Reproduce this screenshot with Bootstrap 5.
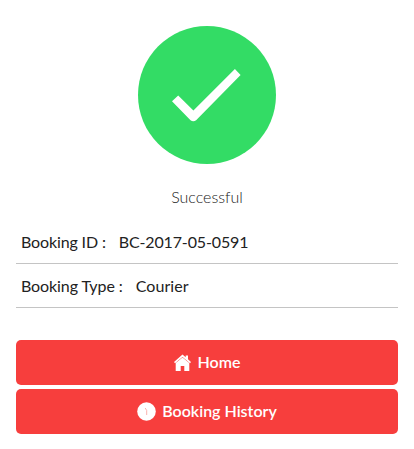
<!DOCTYPE html>
<html lang="en">
<head>
<meta charset="utf-8">
<meta name="viewport" content="width=device-width, initial-scale=1">
<title>Booking Successful</title>
<link href="https://cdn.jsdelivr.net/npm/bootstrap@5.3.0/dist/css/bootstrap.min.css" rel="stylesheet">
<style>
body { font-family: Lato, sans-serif; font-size: 16px; color: #222; background: #fff; }
.confirm { padding: 26px 16px 15px; }
.tick { width: 138px; height: 138px; }
.status { font-weight: 300; line-height: 24px; margin-top: 21px; color: #222; }
.details { margin: 12px 0 32px; }
.detail { height: 44px; padding: 0 5px; border-bottom: 1px solid #c4c4c4; line-height: 43px; letter-spacing: -.14px; }
.detail:first-child { height: 43px; line-height: 42px; }
.detail dt { font-weight: 400; margin-right: 13px; }
.detail + .detail { letter-spacing: -.1px; line-height: 44px; }
.detail + .detail dd { letter-spacing: .08px; }
.actions { gap: 4px; }
.btn-action { --bs-btn-color: #fff; --bs-btn-bg: #f73e3d; --bs-btn-hover-color: #fff; --bs-btn-hover-bg: #de3231; --bs-btn-border-radius: 5px; height: 45px; padding: 0; border: 0; gap: 6px; font-weight: 600; font-size: 16px; }
.btn-action span { padding-bottom: 2px; }
</style>
</head>
<body>
<main class="confirm">
  <div class="text-center">
    <svg class="tick d-block mx-auto" viewBox="0 0 138 138" aria-hidden="true">
      <circle cx="69" cy="69" r="69" fill="#33dc65"/>
      <path d="M40.2 69.4 34 75.2 52.5 94.2Q55.3 96.4 58.1 94.2L102.6 49 96.9 43 55.4 84.6Z" fill="#fff"/>
    </svg>
    <p class="status mb-0">Successful</p>
  </div>
  <dl class="details">
    <div class="detail d-flex"><dt>Booking ID :</dt><dd class="mb-0">BC-2017-05-0591</dd></div>
    <div class="detail d-flex"><dt>Booking Type :</dt><dd class="mb-0">Courier</dd></div>
  </dl>
  <div class="actions d-grid">
    <a class="btn btn-action d-flex align-items-center justify-content-center" href="#">
      <svg width="18" height="18" viewBox="0 0 18 18" aria-hidden="true">
        <path d="M8.5.5 0 8l1 1.2L8.5 3 16 9.2 17 8l-3-2.7V1.5h-2.3v1.8Z" fill="#fff"/>
        <path d="M8.5 3.6 1.7 9V17h5v-5h3.6v5h5V9Z" fill="#fff"/>
      </svg><span>Home</span>
    </a>
    <a class="btn btn-action d-flex align-items-center justify-content-center" href="#">
      <svg width="19" height="19" viewBox="0 0 19 19" aria-hidden="true">
        <circle cx="9.5" cy="9.5" r="9.3" fill="#fff"/>
        <path d="M8.2 6 9.7 8.5V13" fill="none" stroke="#f9a9a5" stroke-width=".9"/>
      </svg><span>Booking History</span>
    </a>
  </div>
</main>
<script src="https://cdn.jsdelivr.net/npm/bootstrap@5.3.0/dist/js/bootstrap.bundle.min.js"></script>
</body>
</html>
